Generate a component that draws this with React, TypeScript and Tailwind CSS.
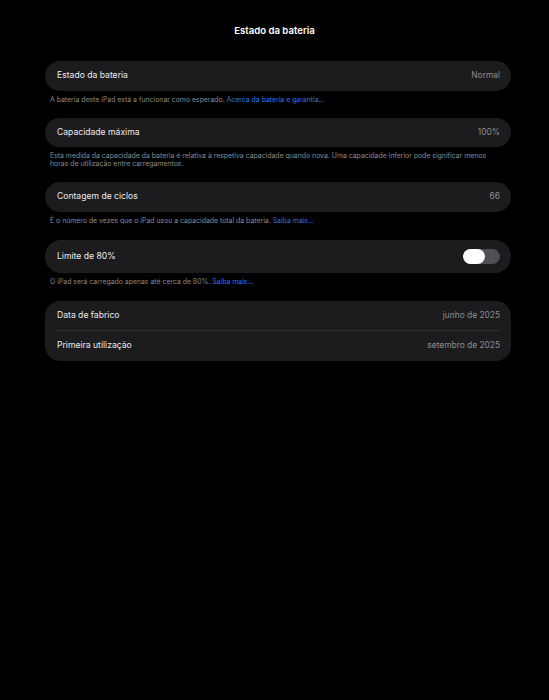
const font = { fontFamily: 'Inter, "Noto Sans", sans-serif' }

function Row({ label, value, children }: { label: string; value?: string; children?: React.ReactNode }) {
  return (
    <div className="flex h-[29.5px] items-center justify-between pl-3 pr-[11px]">
      <span className="text-[8.6px] text-[#ebebf0]">{label}</span>
      {value && <span className="text-[8.4px] text-[#8d8d92]">{value}</span>}
      {children}
    </div>
  )
}

function Note({ children }: { children: React.ReactNode }) {
  return (
    <p className="mt-[5px] px-[5px] text-[6.9px] leading-[8px] text-[#8a8a8f]">{children}</p>
  )
}

function Link({ children }: { children: React.ReactNode }) {
  return <span className="text-[#2f74e0]">{children}</span>
}

export default function App() {
  return (
    <div className="min-h-[700px] w-full bg-black antialiased" style={font}>
      <div className="pt-[25px] text-center text-[9.6px] leading-[12px] font-semibold text-white">
        Estado da bateria
      </div>

      <div className="mx-[45px] mt-[24px] w-[466px]">
        <div className="rounded-[15px] bg-[#1c1c1e]">
          <Row label="Estado da bateria" value="Normal" />
        </div>
        <Note>
          A bateria deste iPad está a funcionar como esperado. <Link>Acerca da bateria e garantia…</Link>
        </Note>

        <div className="mt-[14px] rounded-[15px] bg-[#1c1c1e]">
          <Row label="Capacidade máxima" value="100%" />
        </div>
        <Note>
          Esta medida da capacidade da bateria é relativa à respetiva capacidade quando nova. Uma capacidade inferior pode significar menos horas de utilização entre carregamentos.
        </Note>

        <div className="mt-[14px] rounded-[15px] bg-[#1c1c1e]">
          <Row label="Contagem de ciclos" value="66" />
        </div>
        <Note>
          É o número de vezes que o iPad usou a capacidade total da bateria. <Link>Saiba mais…</Link>
        </Note>

        <div className="mt-[15px] rounded-[16px] bg-[#1c1c1e]">
          <div className="flex h-[33px] items-center justify-between pl-3 pr-[11px]">
            <span className="text-[8.6px] text-[#ebebf0]">Limite de 80%</span>
            <div className="flex h-[15px] w-[37px] items-center rounded-full bg-[#4f4f54]">
              <div className="h-[15px] w-[22px] rounded-full bg-white" />
            </div>
          </div>
        </div>
        <Note>
          O iPad será carregado apenas até cerca de 80%. <Link>Saiba mais…</Link>
        </Note>

        <div className="mt-[15px] rounded-[15px] bg-[#1c1c1e]">
          <Row label="Data de fabrico" value="junho de 2025" />
          <div className="ml-3 mr-[11px] h-px bg-[#303033]" />
          <Row label="Primeira utilização" value="setembro de 2025" />
        </div>
      </div>
    </div>
  )
}
